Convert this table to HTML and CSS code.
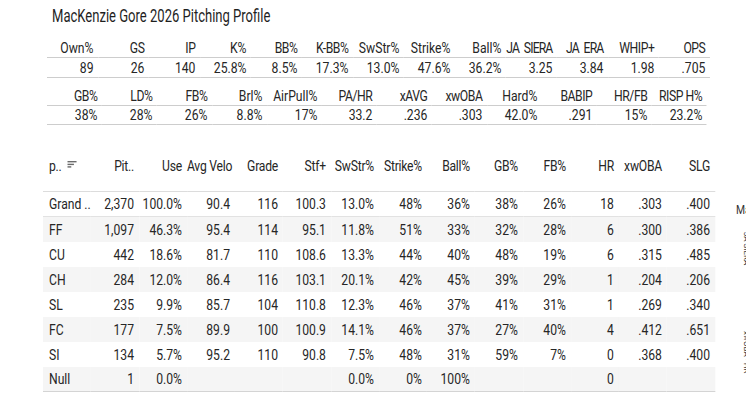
FILE: index.html
```html
<!DOCTYPE html>
<html lang="en">
<head>
<meta charset="utf-8">
<title>MacKenzie Gore 2026 Pitching Profile</title>
<link rel="stylesheet" href="styles.css">
</head>
<body>
<div class="layout">
  <main class="main">
    <h1 class="title">MacKenzie Gore 2026 Pitching Profile</h1>

    <div class="stats stats-13">
      <div class="h">Own%</div><div class="h caps">GS</div><div class="h caps">IP</div><div class="h">K%</div><div class="h caps">BB%</div><div class="h caps">K-BB%</div><div class="h">SwStr%</div><div class="h">Strike%</div><div class="h">Ball%</div><div class="h caps2">JA SIERA</div><div class="h caps2">JA ERA</div><div class="h caps">WHIP+</div><div class="h caps">OPS</div>
      <div class="v">89</div><div class="v">26</div><div class="v">140</div><div class="v">25.8%</div><div class="v">8.5%</div><div class="v">17.3%</div><div class="v">13.0%</div><div class="v">47.6%</div><div class="v">36.2%</div><div class="v">3.25</div><div class="v">3.84</div><div class="v">1.98</div><div class="v">.705</div>
    </div>

    <div class="stats stats-12">
      <div class="h caps">GB%</div><div class="h caps">LD%</div><div class="h caps">FB%</div><div class="h">Brl%</div><div class="h">AirPull%</div><div class="h caps">PA/HR</div><div class="h caps">xAVG</div><div class="h caps">xwOBA</div><div class="h">Hard%</div><div class="h caps">BABIP</div><div class="h caps">HR/FB</div><div class="h caps">RISP H%</div>
      <div class="v">38%</div><div class="v">28%</div><div class="v">26%</div><div class="v">8.8%</div><div class="v">17%</div><div class="v">33.2</div><div class="v">.236</div><div class="v">.303</div><div class="v">42.0%</div><div class="v">.291</div><div class="v">15%</div><div class="v">23.2%</div>
    </div>

    <table class="pitches">
      <thead>
        <tr>
          <th class="first"><span class="sort-head">p..<svg class="sort-icon" width="12" height="8" viewBox="0 0 12 8"><rect x="0" y="0" width="11.4" height="1.4" fill="#6b6b6b"/><rect x="0" y="2.7" width="8.2" height="1.4" fill="#6b6b6b"/><rect x="0" y="5.2" width="4.9" height="1.4" fill="#6b6b6b"/></svg></span></th>
          <th>Pit..</th><th>Use</th><th>Avg Velo</th><th>Grade</th><th>Stf+</th><th>SwStr%</th><th>Strike%</th><th>Ball%</th><th>GB%</th><th>FB%</th><th>HR</th><th>xwOBA</th><th>SLG</th>
        </tr>
      </thead>
      <tbody>
        <tr class="total"><td class="first">Grand ..</td><td>2,370</td><td>100.0%</td><td>90.4</td><td>116</td><td>100.3</td><td>13.0%</td><td>48%</td><td>36%</td><td>38%</td><td>26%</td><td>18</td><td>.303</td><td>.400</td></tr>
        <tr class="alt"><td class="first">FF</td><td>1,097</td><td>46.3%</td><td>95.4</td><td>114</td><td>95.1</td><td>11.8%</td><td>51%</td><td>33%</td><td>32%</td><td>28%</td><td>6</td><td>.300</td><td>.386</td></tr>
        <tr><td class="first">CU</td><td>442</td><td>18.6%</td><td>81.7</td><td>110</td><td>108.6</td><td>13.3%</td><td>44%</td><td>40%</td><td>48%</td><td>19%</td><td>6</td><td>.315</td><td>.485</td></tr>
        <tr class="alt"><td class="first">CH</td><td>284</td><td>12.0%</td><td>86.4</td><td>116</td><td>103.1</td><td>20.1%</td><td>42%</td><td>45%</td><td>39%</td><td>29%</td><td>1</td><td>.204</td><td>.206</td></tr>
        <tr><td class="first">SL</td><td>235</td><td>9.9%</td><td>85.7</td><td>104</td><td>110.8</td><td>12.3%</td><td>46%</td><td>37%</td><td>41%</td><td>31%</td><td>1</td><td>.269</td><td>.340</td></tr>
        <tr class="alt"><td class="first">FC</td><td>177</td><td>7.5%</td><td>89.9</td><td>100</td><td>100.9</td><td>14.1%</td><td>46%</td><td>37%</td><td>27%</td><td>40%</td><td>4</td><td>.412</td><td>.651</td></tr>
        <tr><td class="first">SI</td><td>134</td><td>5.7%</td><td>95.2</td><td>110</td><td>90.8</td><td>7.5%</td><td>48%</td><td>31%</td><td>59%</td><td>7%</td><td>0</td><td>.368</td><td>.400</td></tr>
        <tr class="alt last"><td class="first">Null</td><td>1</td><td>0.0%</td><td></td><td></td><td></td><td>0.0%</td><td>0%</td><td>100%</td><td></td><td></td><td>0</td><td></td><td></td></tr>
      </tbody>
    </table>
  </main>

  <aside class="side">
    <div class="side-label">Ma</div>
    <div class="side-vert">JA SIERA</div>
    <div class="side-vert small">xwOBA · HR</div>
  </aside>
</div>
</body>
</html>
```

FILE: styles.css
```css
:root {
  --sx-stats: 0.87;
  --sx-table: 0.81;
}

html, body {
  margin: 0;
  padding: 0;
  background: #ffffff;
  overflow: hidden;
}

body {
  font-family: Roboto, "Liberation Sans", sans-serif;
  color: #262626;
  width: 746px;
  height: 402px;
}

.layout {
  display: flex;
  align-items: flex-start;
}

/* condensed look: blocks are laid out wider, then squeezed horizontally */
.main {
  width: 672px;
  padding-left: 43px;
  flex: none;
}

.title {
  margin: 0 0 0 9px;
  font-size: 17.5px;
  font-weight: 400;
  line-height: 33px;
  color: #1f1f1f;
  white-space: nowrap;
  transform: scaleX(0.745);
  transform-origin: left center;
}

.stats {
  display: grid;
  margin-left: 4px;
  font-size: 14px;
  transform: scaleX(var(--sx-stats));
  transform-origin: left top;
}

.stats-13 {
  grid-template-columns: repeat(13, calc(51px / var(--sx-stats)));
  grid-template-rows: 20px 20px;
  margin-top: 5px;
}

.stats-12 {
  grid-template-columns: repeat(12, calc(55px / var(--sx-stats)));
  grid-template-rows: 20px 19px;
  margin-top: 8px;
}

.stats .h,
.stats .v {
  box-sizing: border-box;
  padding-right: calc(4.5px / var(--sx-stats));
  white-space: nowrap;
  border-bottom: 1px solid #cdcdcd;
  display: flex;
  align-items: center;
  justify-content: flex-end;
}

.stats .caps {
  letter-spacing: -0.5px;
}

.stats .caps2 {
  letter-spacing: -1px;
  word-spacing: 3px;
}

.pitches {
  margin-top: 16px;
  width: calc(672px / var(--sx-table));
  table-layout: fixed;
  border-collapse: separate;
  border-spacing: 0;
  font-size: 15px;
  transform: scaleX(var(--sx-table));
  transform-origin: left top;
}

.pitches th,
.pitches td {
  box-sizing: border-box;
  padding: 0 calc(5px / var(--sx-table)) 0 0;
  text-align: right;
  white-space: nowrap;
}

.pitches th {
  height: 51px;
  font-weight: 400;
  letter-spacing: -0.3px;
  border-bottom: 1px solid #dcdcdc;
  vertical-align: middle;
}

.pitches td {
  height: 25px;
  vertical-align: middle;
}

.pitches .first {
  text-align: left;
  padding-left: calc(6px / var(--sx-table));
  padding-right: 0;
}

.sort-head {
  display: inline-flex;
  align-items: center;
  gap: 7px;
}

.sort-icon {
  display: block;
  margin-top: -3px;
}

.pitches tr.alt td {
  background: #f5f5f5;
}

.pitches tr.total td {
  border-bottom: 1px solid #e2e2e2;
}

.pitches tr.last td {
  border-bottom: 1px solid #d4d4d4;
}

.side {
  margin-left: 21px;
  padding-top: 202px;
  width: 40px;
  flex: none;
  font-size: 13px;
  color: #333;
}

.side-label {
  line-height: 16px;
  transform: scaleX(0.8);
  transform-origin: left center;
}

.side-vert {
  writing-mode: vertical-rl;
  margin-top: 14px;
  margin-left: 6px;
  font-size: 8px;
  line-height: 8px;
}

.side-vert.small {
  margin-top: 66px;
}
```
